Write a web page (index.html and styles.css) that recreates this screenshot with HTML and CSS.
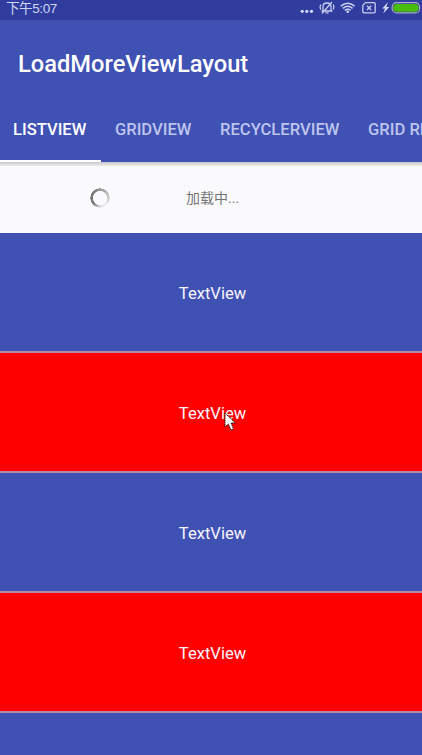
FILE: index.html
```html
<!DOCTYPE html>
<html lang="zh-CN">
<head>
<meta charset="utf-8">
<title>LoadMoreViewLayout</title>
<link rel="stylesheet" href="styles.css">
</head>
<body>
<div class="screen">
  <div class="status">
    <span class="clock">下午5:07</span>
    <svg class="status-icons" width="124" height="20" viewBox="0 0 124 20" fill="none" stroke="#c9cdf0" stroke-width="1.3">
      <g fill="#d5d8f5" stroke="none"><circle cx="4.2" cy="11.3" r="1.6"/><circle cx="8.8" cy="11.3" r="1.6"/><circle cx="13.5" cy="11.3" r="1.6"/></g>
      <path d="M25 10.5V6.5Q25 3 29 3T33 6.5V10.5M23.5 11H34.5M27.5 12.8H30.5M24 13.5L34 2M22.7 4.5Q21.4 7 22.7 9.5M35.3 4.5Q36.6 7 35.3 9.5"/>
      <path d="M42.8 6.1Q49.7 .3 56.6 6.1M44.8 8.3Q49.7 4.2 54.6 8.3M46.8 10.4Q49.7 8.2 52.6 10.4" stroke-width="1.5"/>
      <circle cx="49.7" cy="11.8" r="1.3" fill="#d5d8f5" stroke="none"/>
      <path d="M67.5 2.6H76Q77.2 2.6 77.2 3.8V11.6Q77.2 12.8 76 12.8H66Q64.8 12.8 64.8 11.6V5.2ZM69 5.8L73.2 10M73.2 5.8L69 10"/>
      <path d="M90 2.3L84.2 8.6H87L85.3 13.5L91.3 7H88.3Z" fill="#d5d8f5" stroke="none"/>
      <rect x="94.2" y="2.7" width="27.4" height="10.2" rx="4.5" stroke="#aaaebf" stroke-width="1.2"/>
      <rect x="95.3" y="3.9" width="25.2" height="7.8" rx="3.5" fill="#48bd0c" stroke="none"/>
    </svg>
  </div>
  <header class="appbar">
    <h1 class="title">LoadMoreViewLayout</h1>
    <nav class="tabs">
      <span class="tab active">LISTVIEW</span>
      <span class="tab">GRIDVIEW</span>
      <span class="tab">RECYCLERVIEW</span>
      <span class="tab">GRID RECYCLERVIEW</span>
    </nav>
  </header>
  <div class="shadow"></div>
  <div class="loading">
    <span class="spinner"></span>
    <span class="loading-text">加载中...</span>
  </div>
  <main class="list">
    <div class="row">TextView</div>
    <div class="row red">TextView
      <svg class="pointer" width="13" height="20" viewBox="0 0 13 20"><path d="M1 1V15L4.3 12L7 18L9.5 16.8L7 11H11.3Z" fill="#fff" stroke="#111" stroke-width="1" stroke-dasharray="1.5 .7"/></svg>
    </div>
    <div class="row">TextView</div>
    <div class="row red">TextView</div>
    <div class="row"></div>
  </main>
</div>
</body>
</html>
```
FILE: styles.css
```css
* { box-sizing: border-box; }
body { margin: 0; background: #fafafc; font-family: Roboto, "Noto Sans CJK SC", sans-serif; }
.screen { width: 422px; height: 755px; overflow: hidden; }
.status { display: flex; justify-content: space-between; height: 20px; padding-left: 6px; background: #303d9f; }
.clock { color: #d2d5f3; font: 13.5px/17px "Liberation Sans", "Noto Sans CJK SC", sans-serif; letter-spacing: -.4px; white-space: nowrap; }
.status-icons { flex: none; }
.appbar { height: 142px; background: #3f51b3; overflow: hidden; }
.title { height: 77px; margin: 0; padding: 30px 0 0 18px; color: #fff; font-size: 23.7px; line-height: 28px; font-weight: 500; white-space: nowrap; }
.tabs { display: flex; height: 65px; }
.tab { flex: none; height: 65px; padding: 0 14.3px; color: #bdc4ed; font-size: 16.6px; line-height: 65px; font-weight: 500; white-space: nowrap; }
.tab.active { width: 100.6px; padding: 0 0 0 13px; color: #fff; border-bottom: 2px solid #fff; }
.shadow { height: 4px; background: linear-gradient(#c6c6ca, #dedee1 60%, #ececef); }
.loading { display: flex; align-items: center; height: 67px; padding: 0 0 4px 90px; }
.spinner { width: 20px; height: 20px; border-radius: 50%; background: conic-gradient(from 150deg, #eeeef0, #dcdcde 8%, #777 22%, #777 45%, #999 60%, #ccc 82%, #f2f2f4); -webkit-mask: radial-gradient(circle, transparent 6.8px, #000 7.4px, #000 9.5px, transparent 10px); mask: radial-gradient(circle, transparent 6.8px, #000 7.4px, #000 9.5px, transparent 10px); }
.loading-text { margin-left: 76px; color: #737375; font-size: 14px; line-height: 20px; }
.row { position: relative; height: 120px; padding: 0 0 0 3px; background: #3f51b3; border-bottom: 2px solid #b58ba8; color: #f7f4fc; font-size: 16.6px; line-height: 121px; text-align: center; }
.row.red { background: #fe0000; }
.pointer { position: absolute; left: 224px; top: 59px; }
```
